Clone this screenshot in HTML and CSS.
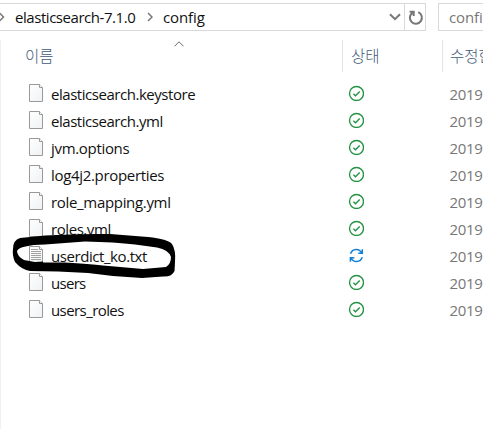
FILE: index.html
```
<!DOCTYPE html>
<html lang="ko">
<head>
<meta charset="utf-8">
<title>config</title>
<link rel="stylesheet" href="styles.css">
</head>
<body>
<svg class="defs" width="0" height="0">
  <defs>
    <linearGradient id="paper" x2="1" y2="1"><stop stop-color="#fff"/><stop offset="1" stop-color="#eff1f3"/></linearGradient>
    <symbol id="file" viewBox="0 0 15 18">
      <path d="M.5.5H10.5L13.5 3.5V17.5H.5Z" fill="url(#paper)" stroke="#999"/>
      <path d="M10.5.5V3.5H13.5" fill="#fff" stroke="#999"/>
    </symbol>
    <symbol id="text" viewBox="0 0 15 18">
      <use href="#file"/>
      <path d="M2 3.5H9M2 5.5H12M2 7.5H12M2 9.5H12M2 11.5H12M2 13.5H12" stroke="#8d8d8d" stroke-width=".8"/>
    </symbol>
    <symbol id="ok" viewBox="0 0 16 16">
      <circle cx="8.5" cy="8.5" r="7" fill="none" stroke="#229342" stroke-width="1.35"/>
      <path d="M5.4 8.7L7.5 10.7L11.7 6.5" fill="none" stroke="#229342" stroke-width="1.35"/>
    </symbol>
    <symbol id="sync" viewBox="0 0 16 16">
      <path d="M2.5 6.8C4.5 1.4 11 1.1 13.8 6M14.3 2.2V6.2H10.3M14.3 10.2C12.3 15.6 5.5 15.9 3 11M2.4 14.8V10.8H6.4" fill="none" stroke="#1180d8" stroke-width="1.5"/>
    </symbol>
  </defs>
</svg>
<div class="toolbar">
  <div class="address">
    <svg class="first" width="5" height="10" viewBox="0 0 5 10"><path d="M-.5 1L3.5 5L-.5 9"/></svg>
    <span class="crumb parent">elasticsearch-7.1.0</span>
    <svg class="next" width="6" height="10" viewBox="0 0 6 10"><path d="M1 1L5 5L1 9"/></svg>
    <span class="crumb current">config</span>
    <svg class="down" width="12" height="8" viewBox="0 0 12 8"><path d="M1 1.2L6 6.2L11 1.2"/></svg>
    <div class="refresh"><svg width="16" height="16" viewBox="0 0 16 16"><path d="M10.2 2.2A6 6 0 1 1 4.8 2.6M1.6 1.7H5.7V6"/></svg></div>
  </div>
  <div class="search">confi</div>
</div>
<div class="list">
  <div class="head">
    <div class="name">이름<svg class="sort" width="10" height="6" viewBox="0 0 10 6"><path d="M.5 5.3L5 .8L9.5 5.3"/></svg></div>
    <div class="state">상태</div>
    <div class="date">수정한</div>
  </div>
  <div class="row"><svg class="icon"><use href="#file"/></svg><span class="label keystore">elasticsearch.keystore</span><svg class="status"><use href="#ok"/></svg><span class="year">2019</span></div>
  <div class="row"><svg class="icon"><use href="#file"/></svg><span class="label yml">elasticsearch.yml</span><svg class="status"><use href="#ok"/></svg><span class="year">2019</span></div>
  <div class="row"><svg class="icon"><use href="#file"/></svg><span class="label jvm">jvm.options</span><svg class="status"><use href="#ok"/></svg><span class="year">2019</span></div>
  <div class="row"><svg class="icon"><use href="#file"/></svg><span class="label log">log4j2.properties</span><svg class="status"><use href="#ok"/></svg><span class="year">2019</span></div>
  <div class="row"><svg class="icon"><use href="#file"/></svg><span class="label mapping">role_mapping.yml</span><svg class="status"><use href="#ok"/></svg><span class="year">2019</span></div>
  <div class="row"><svg class="icon"><use href="#file"/></svg><span class="label roles">roles.yml</span><svg class="status"><use href="#ok"/></svg><span class="year">2019</span></div>
  <div class="row"><svg class="icon"><use href="#text"/></svg><span class="label userdict">userdict_ko.txt</span><svg class="status"><use href="#sync"/></svg><span class="year">2019</span></div>
  <div class="row"><svg class="icon"><use href="#file"/></svg><span class="label users">users</span><svg class="status"><use href="#ok"/></svg><span class="year">2019</span></div>
  <div class="row"><svg class="icon"><use href="#file"/></svg><span class="label uroles">users_roles</span><svg class="status"><use href="#ok"/></svg><span class="year">2019</span></div>
</div>
<svg class="marker" width="164" height="47" viewBox="12 232 164 47">
  <path fill-rule="evenodd" d="M13 249Q13 240 20 238L45 235.5Q75 233.500 110 234L148 237Q168 239 172 244Q176 250 175 262L174.500 271Q172 277 163 276.500L142 278Q115 277 88 273L58 271.500L30 271Q22 270 15 262Q12 255 13 249ZM17 251Q17 256 24 260L35 262L43 261.500V262.500L65 262.500Q90 264 103 265.500L143 269L166 267Q171 264 171 257Q169 250 157 247.500L135 244.500Q115 242 85 241.500L45 244.500Q20 245 17 251Z"/>
</svg>
</body>
</html>
```
FILE: styles.css
```
* { box-sizing: border-box; }
body {
  margin: 0;
  width: 483px;
  height: 429px;
  overflow: hidden;
  position: relative;
  background: #fff;
  font: 15px/27px "Open Sans", "Noto Sans CJK KR", sans-serif;
  color: #111;
}
svg { flex: none; display: block; }
.defs { position: absolute; }
.toolbar { display: flex; gap: 12px; padding-top: 3px; height: 40px; }
.address {
  display: flex;
  align-items: center;
  width: 426px;
  height: 28px;
  border: 1px solid #d9d9d9;
  border-left: 0;
}
.address path { fill: none; stroke: #777; stroke-width: 1.5; }
.crumb { white-space: nowrap; line-height: 24px; padding-bottom: 1px; }
.parent { width: 132px; margin-left: 10px; letter-spacing: -.45px; }
.current { width: 50px; margin-left: 10px; letter-spacing: -.1px; }
.address .down { margin-left: auto; margin-right: 3px; }
.address .down path { stroke-width: 2; }
.refresh { width: 21px; height: 26px; border-left: 1px solid #d9d9d9; padding: 6px 0 0 3px; }
.address .refresh path { stroke-width: 2; }
.search {
  flex: 1;
  height: 28px;
  border: 1px solid #d9d9d9;
  border-right: 0;
  padding-left: 10px;
  line-height: 26px;
  letter-spacing: -.1px;
  color: #777;
}
.list { border-left: 1px solid #f1f1f1; height: 389px; }
.head {
  display: flex;
  height: 32px;
  margin-bottom: 9px;
  color: #405878;
  font-family: "Noto Sans CJK KR", sans-serif;
  font-size: 15.5px;
  font-weight: 300;
  line-height: 31px;
  white-space: nowrap;
}
.name { width: 341px; padding-left: 24px; display: flex; }
.sort { margin: 1px 0 0 120.5px; }
.sort path { fill: none; stroke: #666; }
.state, .date { width: 100px; border-left: 1px solid #e5e5e5; padding-left: 8px; }
.date { width: 41px; padding-left: 7px; overflow: hidden; }
.row { display: flex; height: 27px; }
.icon { width: 15px; height: 18px; margin: 3px 7px 0 28px; }
.label { width: 297px; white-space: nowrap; }
.status { width: 16px; height: 16px; margin-top: 4px; }
.year { margin-left: 85.5px; color: #777; letter-spacing: -.3px; }
.keystore, .yml { letter-spacing: -.46px; }
.jvm, .log, .mapping { letter-spacing: -.32px; }
.roles, .userdict { letter-spacing: -.43px; }
.users { letter-spacing: -.7px; }
.uroles { letter-spacing: -.58px; }
.marker { position: absolute; left: 12px; top: 232px; }
```
